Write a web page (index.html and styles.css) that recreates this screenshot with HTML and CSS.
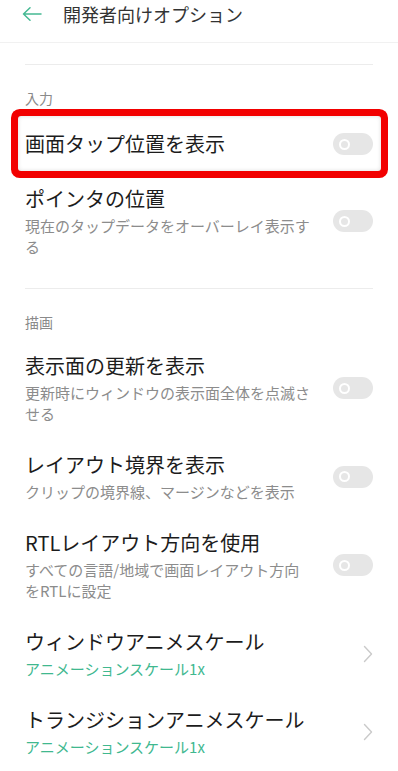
FILE: index.html
```html
<!DOCTYPE html>
<html lang="ja">
<head>
<meta charset="utf-8">
<title>開発者向けオプション</title>
<link rel="stylesheet" href="styles.css">
</head>
<body>
<div class="screen">
  <header class="header">
    <svg class="back" width="20" height="14" viewBox="0 0 20 14"><path d="M19 7H1.5M8 0.8L1.5 7L8 13.2" fill="none" stroke="#45b993" stroke-width="1.5" stroke-linecap="round" stroke-linejoin="round"/></svg>
    <div class="header-title">開発者向けオプション</div>
  </header>

  <div class="divider first"></div>

  <div class="section-label">入力</div>

  <div class="item highlight">
    <div class="text">
      <div class="title">画面タップ位置を表示</div>
    </div>
    <div class="toggle"><span class="knob"></span></div>
  </div>

  <div class="item">
    <div class="text">
      <div class="title">ポインタの位置</div>
      <div class="sub">現在のタップデータをオーバーレイ表示する</div>
    </div>
    <div class="toggle"><span class="knob"></span></div>
  </div>

  <div class="divider second"></div>

  <div class="section-label">描画</div>

  <div class="item">
    <div class="text">
      <div class="title">表示面の更新を表示</div>
      <div class="sub">更新時にウィンドウの表示面全体を点滅させる</div>
    </div>
    <div class="toggle"><span class="knob"></span></div>
  </div>

  <div class="item">
    <div class="text">
      <div class="title">レイアウト境界を表示</div>
      <div class="sub">クリップの境界線、マージンなどを表示</div>
    </div>
    <div class="toggle"><span class="knob"></span></div>
  </div>

  <div class="item">
    <div class="text">
      <div class="title">RTLレイアウト方向を使用</div>
      <div class="sub">すべての言語/地域で画面レイアウト方向をRTLに設定</div>
    </div>
    <div class="toggle"><span class="knob"></span></div>
  </div>

  <div class="item">
    <div class="text">
      <div class="title">ウィンドウアニメスケール</div>
      <div class="sub green">アニメーションスケール1x</div>
    </div>
    <svg class="chev" width="10" height="18" viewBox="0 0 10 18"><path d="M1.5 1.5L8.5 9L1.5 16.5" fill="none" stroke="#cacaca" stroke-width="1.4" stroke-linecap="round" stroke-linejoin="round"/></svg>
  </div>

  <div class="item">
    <div class="text">
      <div class="title">トランジションアニメスケール</div>
      <div class="sub green">アニメーションスケール1x</div>
    </div>
    <svg class="chev" width="10" height="18" viewBox="0 0 10 18"><path d="M1.5 1.5L8.5 9L1.5 16.5" fill="none" stroke="#cacaca" stroke-width="1.4" stroke-linecap="round" stroke-linejoin="round"/></svg>
  </div>
</div>
</body>
</html>
```

FILE: styles.css
```css
* { box-sizing: border-box; }

html, body {
  margin: 0;
  padding: 0;
  background: #ffffff;
}

body {
  font-family: "Noto Sans CJK JP", "Noto Sans", sans-serif;
  color: #1c1c1c;
  width: 398px;
  height: 771px;
  overflow: hidden;
}

.screen {
  display: flex;
  flex-direction: column;
}

.header {
  height: 43px;
  border-bottom: 1px solid #f1f1f1;
  display: flex;
  align-items: flex-start;
  padding-left: 22px;
}

.back {
  margin-top: 7px;
  flex: none;
}

.header-title {
  margin-left: 21px;
  font-size: 18px;
  line-height: 29px;
  color: #333333;
}

.divider {
  height: 1px;
  background: #ececec;
  margin: 0 25px;
}

.divider.first { margin-top: 21px; }
.divider.second { margin-top: 18px; }

.section-label {
  margin-top: 23px;
  padding: 0 25px;
  font-size: 14px;
  line-height: 20px;
  color: #8a8a8a;
}

.section-label + .item { margin-top: 6px; }
.section-label + .highlight { margin-top: 8px; }

.item {
  display: flex;
  align-items: center;
  padding: 14px 25px 13px;
}

.highlight {
  margin-left: 18px;
  margin-right: 17px;
  padding-left: 7px;
  padding-right: 8px;
  border-radius: 3px;
  box-shadow: 0 0 0 7px #f20000, inset 0 0 4px rgba(0, 0, 0, 0.14);
}

.text {
  flex: 1;
  min-width: 0;
  margin-right: 20px;
}

.title {
  font-size: 20px;
  line-height: 28px;
  color: #1c1c1c;
}

.sub {
  margin-top: 2px;
  font-size: 15px;
  line-height: 21px;
  color: #8c8c8c;
}

.sub.green {
  color: #40b88f;
}

.toggle {
  flex: none;
  width: 40px;
  height: 22px;
  border-radius: 11px;
  background: #e6e6e6;
  display: flex;
  align-items: center;
  padding-left: 6px;
}

.knob {
  width: 11px;
  height: 11px;
  border-radius: 50%;
  border: 2.5px solid #ffffff;
  background: #e6e6e6;
}

.chev {
  flex: none;
  margin-right: 0;
  margin-left: 30px;
}
```
